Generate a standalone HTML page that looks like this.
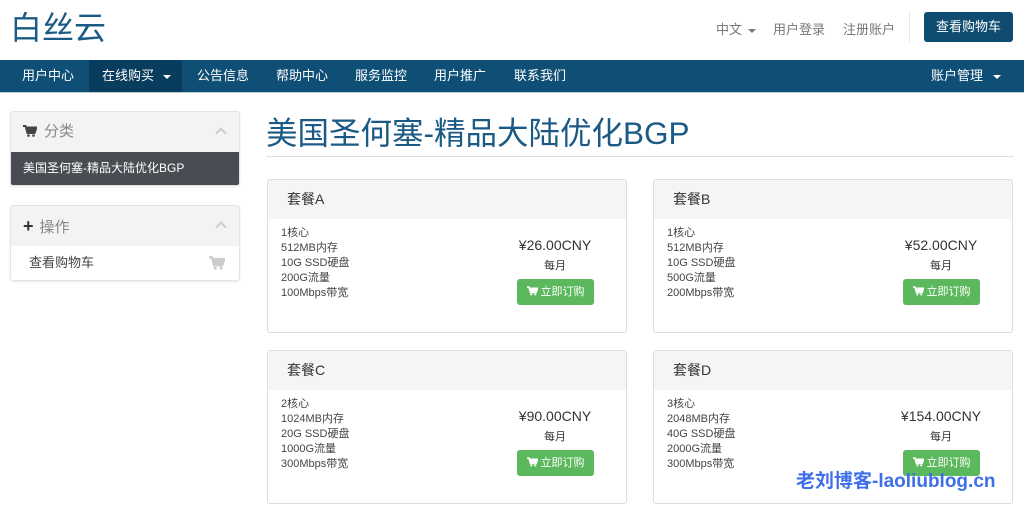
<!DOCTYPE html>
<html><head><meta charset="utf-8"><style>
*{margin:0;padding:0;box-sizing:border-box}
body{width:1024px;height:515px;background:#fff;font-family:"Liberation Sans","Noto Sans CJK SC",sans-serif;position:relative;overflow:hidden;color:#333}
.a{position:absolute;white-space:nowrap}
.logo{left:10px;top:6px;font-size:32px;color:#1a5a85;line-height:44px}
.top{font-size:13px;color:#777;top:19px}
.caret{display:inline-block;width:0;height:0;border-left:4px solid transparent;border-right:4px solid transparent;border-top:4px solid currentColor;vertical-align:middle;margin-left:6px}
.btncart{left:924px;top:12px;width:89px;height:30px;background:#0f4c70;border-radius:3px;color:#fff;font-size:13px;text-align:center;line-height:30px}
.nav{left:0;top:60px;width:1024px;height:33px;background:#0f4f76;border-bottom:1px solid #b8c9d6}
.nav span{position:absolute;top:0;line-height:32px;color:#fff;font-size:13px}
.panel{left:10px;width:230px;border:1px solid #e3e3e3;border-radius:3px;box-shadow:0 1px 2px rgba(0,0,0,.08);overflow:hidden}
.ph{height:40px;background:#f3f3f3;font-size:15px;color:#888;line-height:40px;padding-left:12px;position:relative}
.chev{position:absolute;right:14px;top:17px;width:8px;height:8px;border-left:2px solid #ccc;border-top:2px solid #ccc;transform:rotate(45deg)}
.title{left:266px;top:113px;font-size:31.5px;color:#1a5a85;line-height:40px}
.hr{left:266px;top:156px;width:748px;height:1px;background:#ddd}
.card{width:360px;height:154px;border:1px solid #ddd;border-radius:3px}
.card .h{height:39px;background:#f5f5f5;font-size:14px;line-height:39px;padding-left:19px;color:#333}
.spec{position:absolute;left:13px;top:46px;font-size:11px;line-height:15px;color:#444}
.price{position:absolute;left:222px;width:130px;text-align:center;top:57px;font-size:14px;color:#333}
.mo{position:absolute;left:222px;width:130px;text-align:center;top:77px;font-size:11px;color:#333}
.buy{position:absolute;left:249px;top:99px;width:77px;height:26px;background:#5cb85c;border-radius:3px;color:#fff;font-size:11px;line-height:26px;text-align:center}
.buy svg{vertical-align:-1px;margin-right:3px}
</style></head><body>
<div class="a logo">白丝云</div>
<div class="a top" style="left:716px">中文<i class="caret"></i></div>
<div class="a top" style="left:773px">用户登录</div>
<div class="a top" style="left:843px">注册账户</div>
<div class="a" style="left:909px;top:12px;width:1px;height:30px;background:#e5e5e5"></div>
<div class="a btncart">查看购物车</div>
<div class="a nav">
<div class="a" style="left:89px;top:0;width:93px;height:32px;background:#093d5e"></div>
<span style="left:22px">用户中心</span>
<span style="left:102px">在线购买<i class="caret" style="margin-left:9px"></i></span>
<span style="left:197px">公告信息</span>
<span style="left:276px">帮助中心</span>
<span style="left:355px">服务监控</span>
<span style="left:434px">用户推广</span>
<span style="left:514px">联系我们</span>
<span style="left:931px">账户管理<i class="caret" style="margin-left:10px"></i></span>
</div>
<div class="a panel" style="top:111px">
<div class="ph"><svg width="14" height="12" viewBox="0 0 14 12" style="vertical-align:-1px;margin-right:7px"><path d="M0 1h2.5l2 7h7l2-5.5H4" fill="none" stroke="#444" stroke-width="2"/><rect x="4" y="3" width="9" height="4" fill="#444"/><circle cx="5.5" cy="10.5" r="1.3" fill="#444"/><circle cx="10.5" cy="10.5" r="1.3" fill="#444"/></svg>分类<span class="chev"></span></div>
<div style="height:33px;background:#474d52;color:#fff;font-size:12px;line-height:33px;padding-left:12px">美国圣何塞-精品大陆优化BGP</div>
</div>
<div class="a panel" style="top:205px">
<div class="ph"><b style="color:#333;font-size:18px;margin-right:6px">+</b>操作<span class="chev"></span></div>
<div style="height:34px;background:#fff;color:#444;font-size:13px;line-height:34px;padding-left:18px;position:relative">查看购物车<svg width="16" height="14" viewBox="0 0 14 12" style="position:absolute;right:14px;top:10px"><path d="M0 1h2.5l2 7h7l2-5.5H4" fill="none" stroke="#ccc" stroke-width="2"/><rect x="4" y="3" width="9" height="4" fill="#ccc"/><circle cx="5.5" cy="10.5" r="1.3" fill="#ccc"/><circle cx="10.5" cy="10.5" r="1.3" fill="#ccc"/></svg></div>
</div>
<div class="a title">美国圣何塞-精品大陆优化BGP</div>
<div class="a hr"></div>

<div class="a card" style="left:267px;top:179px"><div class="h">套餐A</div>
<div class="spec">1核心<br>512MB内存<br>10G SSD硬盘<br>200G流量<br>100Mbps带宽</div>
<div class="price">¥26.00CNY</div><div class="mo">每月</div><div class="buy"><svg width="11" height="10" viewBox="0 0 14 12"><path d="M0 1h2.5l2 7h7l2-5.5H4" fill="none" stroke="#fff" stroke-width="2"/><rect x="4" y="3" width="9" height="4" fill="#fff"/><circle cx="5.5" cy="10.5" r="1.3" fill="#fff"/><circle cx="10.5" cy="10.5" r="1.3" fill="#fff"/></svg>立即订购</div></div>
<div class="a card" style="left:653px;top:179px"><div class="h">套餐B</div>
<div class="spec">1核心<br>512MB内存<br>10G SSD硬盘<br>500G流量<br>200Mbps带宽</div>
<div class="price">¥52.00CNY</div><div class="mo">每月</div><div class="buy"><svg width="11" height="10" viewBox="0 0 14 12"><path d="M0 1h2.5l2 7h7l2-5.5H4" fill="none" stroke="#fff" stroke-width="2"/><rect x="4" y="3" width="9" height="4" fill="#fff"/><circle cx="5.5" cy="10.5" r="1.3" fill="#fff"/><circle cx="10.5" cy="10.5" r="1.3" fill="#fff"/></svg>立即订购</div></div>
<div class="a card" style="left:267px;top:350px"><div class="h">套餐C</div>
<div class="spec">2核心<br>1024MB内存<br>20G SSD硬盘<br>1000G流量<br>300Mbps带宽</div>
<div class="price">¥90.00CNY</div><div class="mo">每月</div><div class="buy"><svg width="11" height="10" viewBox="0 0 14 12"><path d="M0 1h2.5l2 7h7l2-5.5H4" fill="none" stroke="#fff" stroke-width="2"/><rect x="4" y="3" width="9" height="4" fill="#fff"/><circle cx="5.5" cy="10.5" r="1.3" fill="#fff"/><circle cx="10.5" cy="10.5" r="1.3" fill="#fff"/></svg>立即订购</div></div>
<div class="a card" style="left:653px;top:350px"><div class="h">套餐D</div>
<div class="spec">3核心<br>2048MB内存<br>40G SSD硬盘<br>2000G流量<br>300Mbps带宽</div>
<div class="price">¥154.00CNY</div><div class="mo">每月</div><div class="buy"><svg width="11" height="10" viewBox="0 0 14 12"><path d="M0 1h2.5l2 7h7l2-5.5H4" fill="none" stroke="#fff" stroke-width="2"/><rect x="4" y="3" width="9" height="4" fill="#fff"/><circle cx="5.5" cy="10.5" r="1.3" fill="#fff"/><circle cx="10.5" cy="10.5" r="1.3" fill="#fff"/></svg>立即订购</div></div>
<div class="a" style="left:796px;top:470px;font-size:19px;font-weight:bold;color:#3f6fe8;line-height:24px">老刘博客-laoliublog.cn</div>
</body></html>
